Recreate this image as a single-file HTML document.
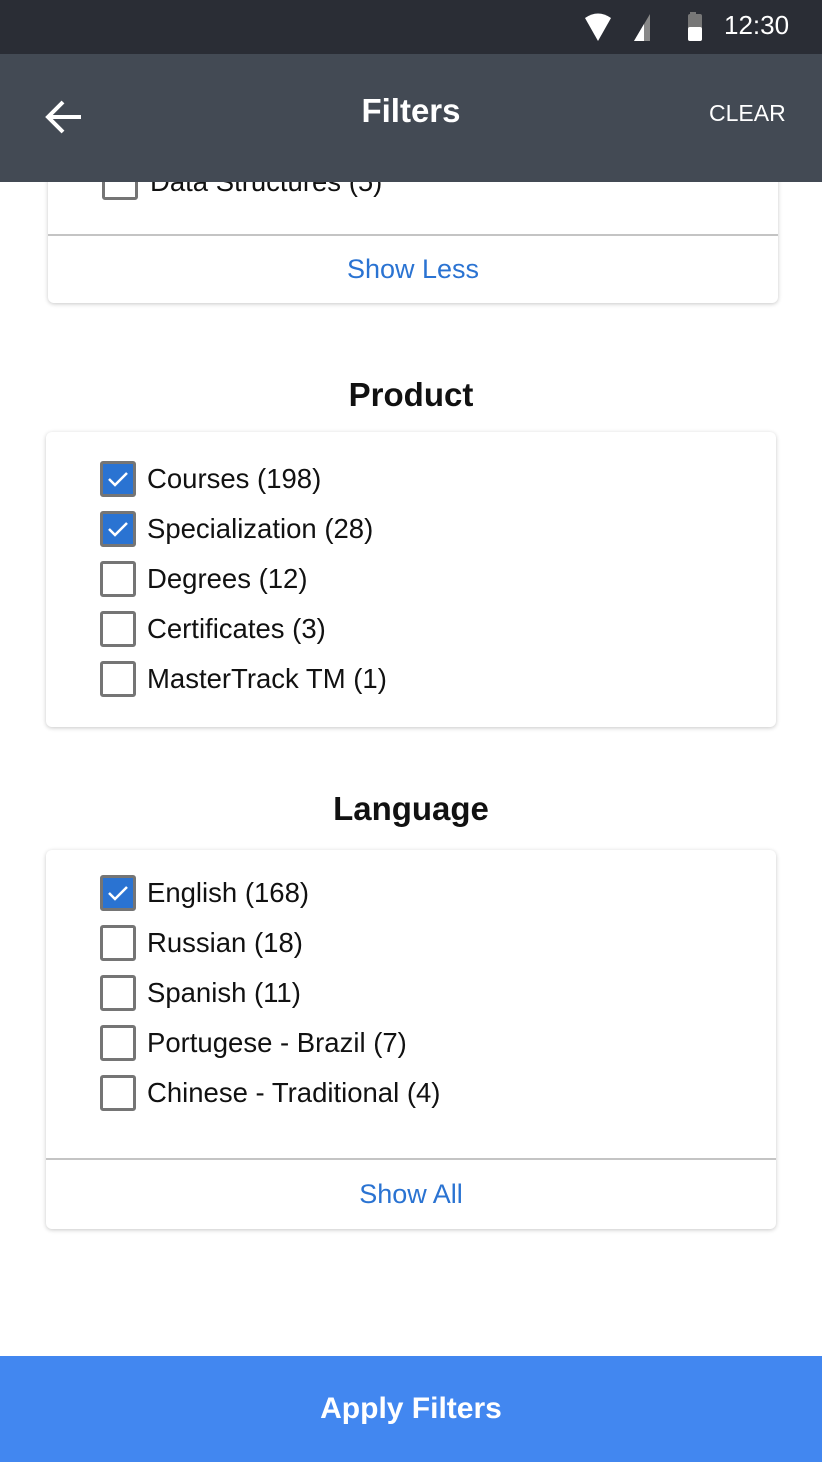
<!DOCTYPE html>
<html><head><style>
*{margin:0;padding:0;box-sizing:border-box}
body{width:822px;height:1462px;position:relative;background:#fff;font-family:"Liberation Sans",Roboto,sans-serif;overflow:hidden}
.abs{position:absolute}
.card{position:absolute;background:#fff;border-radius:6px;box-shadow:0 1px 4px rgba(0,0,0,.22)}
.row{position:absolute;left:54px;height:36px;display:flex;align-items:center}
.cb{width:36px;height:36px;border:3px solid #757575;border-radius:3px;background:#fff;display:flex;align-items:center;justify-content:center}
.cb.on{background:#2a73d2}
.row span{margin-left:11px;font-size:27.5px;color:#111}
.h{position:absolute;left:0;width:822px;text-align:center;font-size:33px;font-weight:bold;color:#111}
.link{position:absolute;left:0;right:0;text-align:center;color:#2a73d2;font-size:27px}
.div{position:absolute;left:0;right:0;height:2px;background:#c4c4c4}
</style></head><body>
<div class="abs" style="left:0;top:0;width:822px;height:54px;background:#2a2d35"></div>
<svg class="abs" style="left:584px;top:12px" width="130" height="32">
<path d="M1 6 Q14 -3 27 6 L14 29 Z" fill="#fff"/>
<path d="M50 29 L66 2 L66 29 Z" fill="#888"/><path d="M50 29 L60 12 L60 29 Z" fill="#fff"/>
<rect x="106" y="0" width="6" height="4" fill="#777"/><rect x="104" y="2" width="14" height="27" rx="2" fill="#777"/><rect x="104" y="15" width="14" height="14" rx="2" fill="#fff"/>
</svg>
<div class="abs" style="left:724px;top:10px;color:#fff;font-size:26px">12:30</div>
<div class="abs" style="left:0;top:54px;width:822px;height:128px;background:#434a54"></div>
<svg class="abs" style="left:44px;top:98px" width="40" height="38"><path d="M37 19 H5 M19 4 L4 19 L19 34" stroke="#fff" stroke-width="4" fill="none"/></svg>
<div class="abs" style="left:0;width:822px;top:92px;text-align:center;color:#fff;font-size:33px;font-weight:bold">Filters</div>
<div class="abs" style="left:709px;top:100px;color:#fff;font-size:23px">CLEAR</div>

<div class="card" style="left:48px;top:150px;width:730px;height:153px;z-index:-1">
<div class="row" style="top:14px"><div class="cb"></div><span style="margin-left:12px">Data Structures (5)</span></div>
<div class="div" style="top:84px"></div>
<div class="link" style="top:104px">Show Less</div>
</div>

<div class="h" style="top:376px">Product</div>
<div class="card" style="left:46px;top:432px;width:730px;height:295px">
<div class="row" style="top:29px"><div class="cb on"><svg width="22" height="18"><path d="M2 9 L8 15 L20 3" stroke="#fff" stroke-width="2.5" fill="none"/></svg></div><span>Courses (198)</span></div>
<div class="row" style="top:79px"><div class="cb on"><svg width="22" height="18"><path d="M2 9 L8 15 L20 3" stroke="#fff" stroke-width="2.5" fill="none"/></svg></div><span>Specialization (28)</span></div>
<div class="row" style="top:129px"><div class="cb"></div><span>Degrees (12)</span></div>
<div class="row" style="top:179px"><div class="cb"></div><span>Certificates (3)</span></div>
<div class="row" style="top:229px"><div class="cb"></div><span>MasterTrack TM (1)</span></div>
</div>

<div class="h" style="top:790px">Language</div>
<div class="card" style="left:46px;top:850px;width:730px;height:379px">
<div class="row" style="top:25px"><div class="cb on"><svg width="22" height="18"><path d="M2 9 L8 15 L20 3" stroke="#fff" stroke-width="2.5" fill="none"/></svg></div><span>English (168)</span></div>
<div class="row" style="top:75px"><div class="cb"></div><span>Russian (18)</span></div>
<div class="row" style="top:125px"><div class="cb"></div><span>Spanish (11)</span></div>
<div class="row" style="top:175px"><div class="cb"></div><span>Portugese - Brazil (7)</span></div>
<div class="row" style="top:225px"><div class="cb"></div><span>Chinese - Traditional (4)</span></div>
<div class="div" style="top:308px"></div>
<div class="link" style="top:329px">Show All</div>
</div>

<div class="abs" style="left:0;top:1356px;width:822px;height:106px;background:#4287f0;color:#fff;font-size:30px;font-weight:bold;text-align:center;line-height:106px">Apply Filters</div>
</body></html>
